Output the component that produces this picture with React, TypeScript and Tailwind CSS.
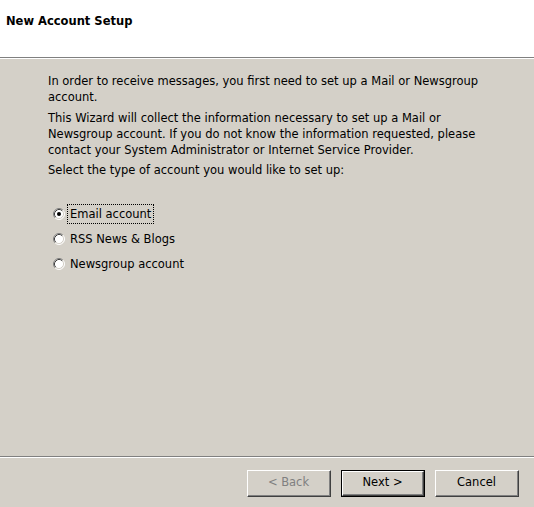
import React, { useState } from 'react';

type Kind = 'email' | 'rss' | 'news';

function Radio({ checked }: { checked: boolean }) {
  return (
    <svg width="12" height="12" viewBox="0 0 12 12" className="shrink-0">
      <circle cx="6" cy="6" r="5" fill="#ffffff" />
      <path d="M2.11 9.89 A5.5 5.5 0 0 1 9.89 2.11" fill="none" stroke="#808080" strokeWidth="1" />
      <path d="M9.89 2.11 A5.5 5.5 0 0 1 2.11 9.89" fill="none" stroke="#ffffff" strokeWidth="1" />
      <path d="M2.82 9.18 A4.5 4.5 0 0 1 9.18 2.82" fill="none" stroke="#404040" strokeWidth="1" />
      <path d="M9.18 2.82 A4.5 4.5 0 0 1 2.82 9.18" fill="none" stroke="#d4d0c8" strokeWidth="1" />
      {checked && <circle cx="6" cy="6" r="2" fill="#000000" />}
    </svg>
  );
}

function Button({ label, disabled, isDefault }: { label: string; disabled?: boolean; isDefault?: boolean }) {
  const face = (
    <span className="flex h-full w-full border border-t-white border-l-white border-r-[#404040] border-b-[#404040]">
      <span className={`flex flex-1 items-center justify-center border-r border-b border-[#808080] ${disabled ? 'text-[#808080]' : 'text-black'}`}>
        {label}
      </span>
    </span>
  );
  return (
    <button
      disabled={disabled}
      className={`flex h-[27px] w-[84px] bg-[#d4d0c8] p-0 ${isDefault ? 'border border-black' : ''}`}
    >
      {face}
    </button>
  );
}

export default function App() {
  const [kind, setKind] = useState<Kind>('email');

  const options: { id: Kind; label: string }[] = [
    { id: 'email', label: 'Email account' },
    { id: 'rss', label: 'RSS News & Blogs' },
    { id: 'news', label: 'Newsgroup account' },
  ];

  return (
    <div className="flex h-[507px] w-[534px] flex-col overflow-hidden bg-[#d4d0c8] text-[11.5px] text-black [font-family:'DejaVu_Sans',Tahoma,sans-serif]">
      {/* header */}
      <div className="h-[58px] shrink-0 border-b border-[#808080] bg-white">
        <div className="pl-[6px] pt-[13px] font-bold leading-[16px]">New Account Setup</div>
      </div>

      {/* body */}
      <div className="flex-1 border-t border-white pl-[48px] pt-[14px] leading-[16px]">
        <p className="whitespace-nowrap">
          In order to receive messages, you first need to set up a Mail or Newsgroup
          <br />
          account.
        </p>
        <p className="mt-[5px] whitespace-nowrap">
          This Wizard will collect the information necessary to set up a Mail or
          <br />
          Newsgroup account. If you do not know the information requested, please
          <br />
          contact your System Administrator or Internet Service Provider.
        </p>
        <p className="mt-[4px] whitespace-nowrap">Select the type of account you would like to set up:</p>

        <div className="mt-[23px] flex flex-col">
          {options.map((o) => (
            <label
              key={o.id}
              className="flex h-[25px] cursor-default items-center gap-[2px] pl-[5px]"
              onClick={() => setKind(o.id)}
            >
              <Radio checked={kind === o.id} />
              <span
                className={`px-[2px] py-[1px] leading-[16px] ${kind === o.id ? 'border border-dotted border-black' : 'border border-transparent'}`}
              >
                {o.label}
              </span>
            </label>
          ))}
        </div>
      </div>

      {/* footer */}
      <div className="shrink-0 border-t border-[#808080]">
        <div className="flex h-[50px] justify-end gap-[10px] border-t border-white pr-[15px] pt-[12px]">
          <Button label="< Back" disabled />
          <Button label="Next >" isDefault />
          <Button label="Cancel" />
        </div>
      </div>
    </div>
  );
}
